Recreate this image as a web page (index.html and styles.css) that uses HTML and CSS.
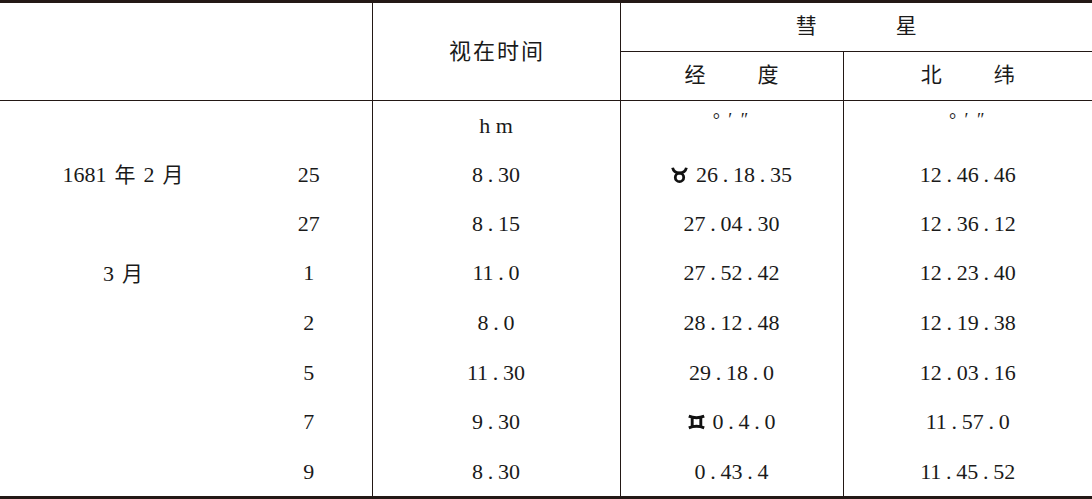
FILE: index.html
```html
<!DOCTYPE html>
<html lang="zh">
<head>
<meta charset="utf-8">
<link rel="stylesheet" href="styles.css">
</head>
<body>
<table class="tbl">
  <colgroup>
    <col class="c-a"><col class="c-b"><col class="c-c"><col class="c-d"><col class="c-e">
  </colgroup>
  <thead>
    <tr class="h1">
      <th colspan="2" rowspan="2" class="blank vr"></th>
      <th rowspan="2" class="vr zh time">视在时间</th>
      <th colspan="2" class="zh comet">彗<span class="gap-l"></span>星</th>
    </tr>
    <tr class="h2">
      <th class="vr zh sub">经<span class="gap-m"></span>度</th>
      <th class="zh sub">北<span class="gap-m"></span>纬</th>
    </tr>
  </thead>
  <tbody>
    <tr class="r49">
      <td></td><td class="vr"></td>
      <td class="vr unit">h m</td>
      <td class="vr deg">°&nbsp;′&nbsp;″</td>
      <td class="deg">°&nbsp;′&nbsp;″</td>
    </tr>
    <tr class="r49">
      <td class="date"><span class="num">1681</span><span class="cj">年</span><span class="num">2</span><span class="cj">月</span></td><td class="vr">25</td>
      <td class="vr">8<span class="p">.</span>30</td>
      <td class="vr"><svg class="sym" viewBox="0 0 17 17" width="17" height="17"><path d="M1.6 1.8 Q2.8 7 8.5 7 Q14.2 7 15.4 1.8" fill="none" stroke="#111" stroke-width="2.8"/><circle cx="8.5" cy="11.4" r="4.2" fill="none" stroke="#111" stroke-width="2.8"/></svg>26<span class="p">.</span>18<span class="p">.</span>35</td>
      <td>12<span class="p">.</span>46<span class="p">.</span>46</td>
    </tr>
    <tr class="r49">
      <td></td><td class="vr">27</td>
      <td class="vr">8<span class="p">.</span>15</td>
      <td class="vr">27<span class="p">.</span>04<span class="p">.</span>30</td>
      <td>12<span class="p">.</span>36<span class="p">.</span>12</td>
    </tr>
    <tr class="r50">
      <td class="date"><span class="num">3</span><span class="cj">月</span></td><td class="vr">1</td>
      <td class="vr">11<span class="p">.</span>0</td>
      <td class="vr">27<span class="p">.</span>52<span class="p">.</span>42</td>
      <td>12<span class="p">.</span>23<span class="p">.</span>40</td>
    </tr>
    <tr class="r50">
      <td></td><td class="vr">2</td>
      <td class="vr">8<span class="p">.</span>0</td>
      <td class="vr">28<span class="p">.</span>12<span class="p">.</span>48</td>
      <td>12<span class="p">.</span>19<span class="p">.</span>38</td>
    </tr>
    <tr class="r49">
      <td></td><td class="vr">5</td>
      <td class="vr">11<span class="p">.</span>30</td>
      <td class="vr">29<span class="p">.</span>18<span class="p">.</span>0</td>
      <td>12<span class="p">.</span>03<span class="p">.</span>16</td>
    </tr>
    <tr class="r50">
      <td></td><td class="vr">7</td>
      <td class="vr">9<span class="p">.</span>30</td>
      <td class="vr"><svg class="sym" viewBox="0 0 17 16" width="17" height="16"><path d="M0.8 2.2 Q8.5 5.2 16.2 2.2 M0.8 13.8 Q8.5 10.8 16.2 13.8 M4.2 2.5 V13.5 M12.8 2.5 V13.5" fill="none" stroke="#111" stroke-width="2.9"/></svg>0<span class="p">.</span>4<span class="p">.</span>0</td>
      <td>11<span class="p">.</span>57<span class="p">.</span>0</td>
    </tr>
    <tr class="r49">
      <td></td><td class="vr">9</td>
      <td class="vr">8<span class="p">.</span>30</td>
      <td class="vr">0<span class="p">.</span>43<span class="p">.</span>4</td>
      <td>11<span class="p">.</span>45<span class="p">.</span>52</td>
    </tr>
  </tbody>
</table>
</body>
</html>
```

FILE: styles.css
```css
html, body {
  margin: 0;
  padding: 0;
  background: #fff;
}

.tbl {
  width: 1092px;
  border-collapse: collapse;
  table-layout: fixed;
  border-top: 3px solid #231815;
  border-bottom: 3px solid #231815;
  font-family: "Liberation Serif", "Noto Sans CJK SC", serif;
  color: #1a1a1a;
}

.c-a { width: 246px; }
.c-b { width: 126px; }
.c-c { width: 248px; }
.c-d { width: 223px; }
.c-e { width: 249px; }

th, td {
  padding: 0;
  text-align: center;
  vertical-align: middle;
  font-weight: normal;
  white-space: nowrap;
}

.vr { border-right: 1px solid #231815; }

.h1 th { height: 48px; }
.h2 th { height: 48px; }
.h1 .comet { border-bottom: 1px solid #231815; }
.h2 th, .h1 .blank, .h1 .time { border-bottom: 1px solid #231815; }

.zh {
  font-family: "Noto Sans CJK SC", sans-serif;
  font-size: 21px;
  line-height: 1;
  color: #1a1a1a;
}

.h1 th.comet, .h2 th {
  height: 42px;
  padding-bottom: 6px;
}

.time {
  font-size: 22px;
  letter-spacing: 2px;
  padding-left: 2px;
  padding-bottom: 6px;
}

.gap-l { display: inline-block; width: 79px; }
.gap-m { display: inline-block; width: 52px; }

tbody td {
  font-size: 22px;
  line-height: 1;
}

.r49 td { height: 49px; }
.r50 td { height: 50px; }

.p {
  display: inline-block;
  width: 15px;
  text-align: center;
}

.num { font-family: "Liberation Serif", serif; }
.cj {
  font-family: "Noto Sans CJK SC", sans-serif;
  font-size: 21px;
  margin: 0 8px;
}
.date .cj:last-child { margin-right: 0; }

.r49 td.deg {
  font-size: 18px;
  letter-spacing: 2px;
  vertical-align: top;
  padding-top: 10px;
  height: 39px;
}

.sym {
  display: inline-block;
  vertical-align: -1px;
  margin-right: 8px;
}
```
